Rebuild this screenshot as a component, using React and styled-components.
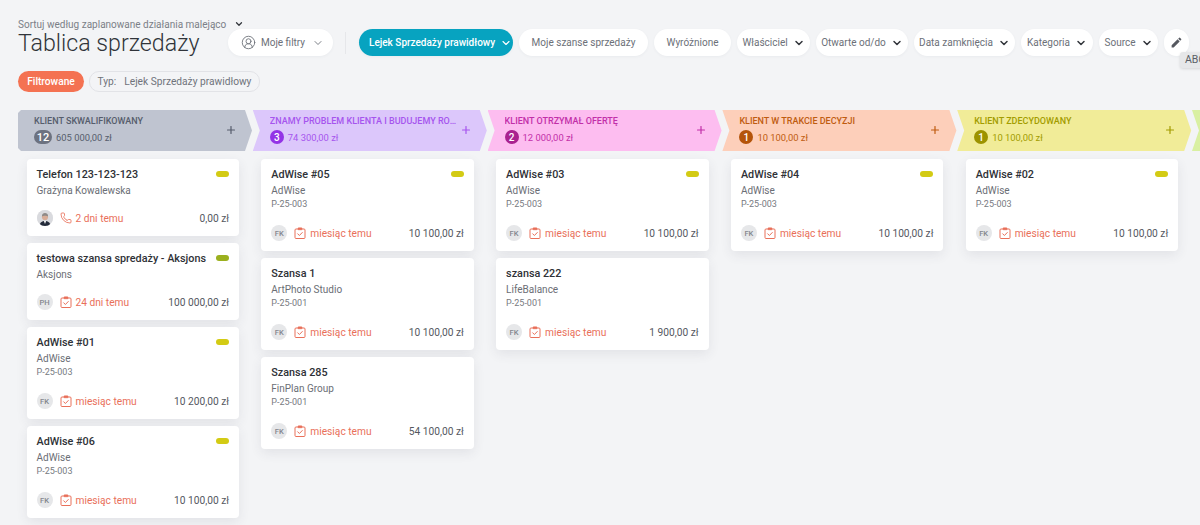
import React from "react";
import styled, { createGlobalStyle } from "styled-components";
import { ChevronDown, CircleUserRound, Phone, Plus } from "lucide-react";
import { MdEdit } from "react-icons/md";

const GlobalStyle = createGlobalStyle`
  html, body {
    margin: 0;
    padding: 0;
    background: #f3f4f6;
    font-family: Roboto, "Liberation Sans", sans-serif;
  }
`;

const Page = styled.div`
  position: relative;
  width: 1200px;
  height: 525px;
  overflow: hidden;
  background: #f3f4f6;
`;

const TopBar = styled.div`
  display: flex;
  align-items: flex-end;
  padding: 18px 0 0 18px;
`;

const TitleBlock = styled.div`
  width: 210px;
  flex: none;
`;

const SortRow = styled.div`
  display: flex;
  align-items: center;
  gap: 8px;
  height: 12px;
  font-size: 10px;
  color: #7b7f87;
  white-space: nowrap;
  svg {
    flex: none;
    color: #33363c;
  }
`;

const Title = styled.h1`
  margin: 0;
  font-size: 23.2px;
  line-height: 26px;
  font-weight: 300;
  color: #30343a;
  white-space: nowrap;
`;

const Chips = styled.div`
  display: flex;
  align-items: center;
  gap: 6px;
`;

const Chip = styled.div`
  display: flex;
  align-items: center;
  justify-content: ${(p) => (p.$pad ? "flex-start" : "center")};
  gap: 5px;
  flex: none;
  box-sizing: border-box;
  width: ${(p) => p.$w}px;
  height: 27px;
  padding-left: ${(p) => p.$pad || 0}px;
  border-radius: 14px;
  background: ${(p) => (p.$active ? "#07a3c0" : "#fff")};
  color: ${(p) => (p.$active ? "#fff" : "#6c7078")};
  font-size: 10px;
  font-weight: ${(p) => (p.$active ? 500 : 400)};
  white-space: nowrap;
  box-shadow: 0 1px 3px rgba(60, 70, 90, 0.05);
`;

const FiltersChevron = styled(ChevronDown)`
  margin-left: 2px;
`;

const Divider = styled.div`
  width: 1px;
  height: 22px;
  background: #e6e7ea;
  margin: 0 7px 0 6px;
  flex: none;
`;

const Tooltip = styled.div`
  position: absolute;
  left: 1180px;
  top: 52px;
  width: 40px;
  height: 16px;
  padding-left: 5px;
  border-radius: 3px;
  background: #e6e7e9;
  color: #5a5e66;
  font-size: 10.5px;
  line-height: 16px;
  box-shadow: 0 1px 3px rgba(0, 0, 0, 0.12);
`;

const FilterRow = styled.div`
  display: flex;
  align-items: center;
  gap: 5px;
  margin: 15px 0 0 18px;
  height: 21px;
`;

const FilterBadge = styled.div`
  width: 66px;
  height: 21px;
  border-radius: 11px;
  background: #f47252;
  color: #fff;
  font-size: 10.2px;
  font-weight: 500;
  line-height: 21px;
  text-align: center;
`;

const FilterTag = styled.div`
  display: flex;
  gap: 8px;
  align-items: center;
  justify-content: center;
  width: 169px;
  height: 19px;
  border: 1px solid #e2e3e7;
  border-radius: 10px;
  color: #6f737b;
  font-size: 10.2px;
  white-space: nowrap;
`;

const Board = styled.div`
  display: flex;
  margin: 18px 0 0 18px;
`;

const Column = styled.div`
  flex: none;
  width: 234.8px;
`;

const Stage = styled.div`
  position: relative;
  height: 41px;
  width: 235px;
  box-sizing: border-box;
  padding: 5px 0 0 ${(p) => (p.$first ? 16 : 17)}px;
  background: ${(p) => p.$bg};
  color: ${(p) => p.$fg};
  clip-path: ${(p) =>
    p.$first
      ? "polygon(0 3px, 3px 0, 227px 0, 234px 50%, 227px 100%, 3px 100%, 0 calc(100% - 3px))"
      : "polygon(0 0, 227px 0, 234px 50%, 227px 100%, 0 100%, 7px 50%)"};
`;

const StageName = styled.div`
  width: 190px;
  font-size: 9px;
  font-weight: 500;
  line-height: 13px;
  text-transform: uppercase;
  white-space: nowrap;
  overflow: hidden;
  text-overflow: ellipsis;
`;

const StageSum = styled.div`
  display: flex;
  align-items: center;
  gap: 4px;
  margin-top: 2px;
  font-size: 9.4px;
  color: ${(p) => p.$fg};
`;

const Count = styled.span`
  display: inline-flex;
  align-items: center;
  justify-content: center;
  min-width: ${(p) => (p.$wide ? 18 : 14)}px;
  height: 14px;
  border-radius: 7px;
  background: ${(p) => p.$bg};
  color: #fff;
  font-size: ${(p) => (p.$wide ? 11 : 10)}px;
  font-weight: 500;
`;

const AddButton = styled.div`
  position: absolute;
  right: 16px;
  top: 14px;
  display: flex;
`;

const CardList = styled.div`
  display: flex;
  flex-direction: column;
  gap: 7px;
  margin-top: 8px;
  padding-left: 8.5px;
  width: 212.5px;
`;

const Card = styled.div`
  box-sizing: border-box;
  padding: 8px 10px 9px;
  background: #fff;
  border-radius: 4px;
  box-shadow: 0 4px 12px rgba(50, 60, 80, 0.09);
`;

const CardHead = styled.div`
  display: flex;
  align-items: center;
  justify-content: space-between;
  height: 14px;
`;

const CardTitle = styled.div`
  font-size: 10.8px;
  font-weight: 500;
  color: #2e3136;
  white-space: nowrap;
`;

const Label = styled.div`
  width: 13px;
  height: 6px;
  border-radius: 3px;
  background: ${(p) => p.$color};
  flex: none;
`;

const Company = styled.div`
  margin-top: 3px;
  font-size: 10px;
  line-height: 13px;
  color: #6b6e75;
`;

const Code = styled.div`
  font-size: 9px;
  line-height: 15px;
  color: #777a81;
`;

const CardFoot = styled.div`
  display: flex;
  align-items: center;
  height: 18px;
  margin-top: 12px;
`;

const Avatar = styled.div`
  display: flex;
  align-items: center;
  justify-content: center;
  width: 16px;
  height: 16px;
  border-radius: 50%;
  background: #e6e7e9;
  color: #85888f;
  font-size: 7.6px;
  font-weight: 500;
  overflow: hidden;
  flex: none;
`;

const Due = styled.div`
  display: flex;
  align-items: center;
  gap: 4px;
  margin-left: 7px;
  color: #e9705a;
  font-size: 10.2px;
  white-space: nowrap;
`;

const Amount = styled.div`
  margin-left: auto;
  font-size: 10.2px;
  color: #55585f;
  white-space: nowrap;
`;

const PersonPhoto = () => (
  <svg width="16" height="16" viewBox="0 0 16 16">
    <rect width="16" height="16" fill="#d9dade" />
    <path d="M2.5 16c.3-3.6 2.4-5 5.5-5s5.2 1.400 5.500 5z" fill="#232a3a" />
    <path d="M6.800 11h2.400l-1.200 3z" fill="#f2f2f2" />
    <circle cx="8" cy="7" r="3.100" fill="#d8ad98" />
    <path d="M4.900 6.400C5 3.900 6.400 3 8 3s3.100.9 3.100 3.400C10 5.500 6 5.500 4.900 6.400z" fill="#8e8a88" />
  </svg>
);

const TaskIcon = () => (
  <svg width="12" height="12" viewBox="0 0 12 12" fill="none" stroke="currentColor" strokeWidth="1">
    <rect x="1" y="2" width="10" height="9.500" rx="1" />
    <rect x="4" y="0.800" width="4" height="2" rx="0.500" fill="currentColor" strokeWidth="0.500" />
    <path d="M3.700 6.800l1.700 1.700 2.900-3" strokeLinecap="round" strokeLinejoin="round" />
  </svg>
);

const stages = [
  {
    name: "Klient skwalifikowany",
    bg: "#bfc4d0",
    fg: "#565d6c",
    badge: "#6c7280",
    count: "12",
    sum: "605 000,00 zł",
    cards: [
      { title: "Telefon 123-123-123", company: "Grażyna Kowalewska", photo: true, phone: true, due: "2 dni temu", amount: "0,00 zł", label: "#d3cb14" },
      { title: "testowa szansa spredaży - Aksjons", company: "Aksjons", who: "PH", due: "24 dni temu", amount: "100 000,00 zł", label: "#9bb01e" },
      { title: "AdWise #01", company: "AdWise", code: "P-25-003", who: "FK", due: "miesiąc temu", amount: "10 200,00 zł", label: "#d3cb14" },
      { title: "AdWise #06", company: "AdWise", code: "P-25-003", who: "FK", due: "miesiąc temu", amount: "10 100,00 zł", label: "#d3cb14" },
    ],
  },
  {
    name: "Znamy problem klienta i budujemy rozwiązanie",
    bg: "#dcc7fb",
    fg: "#a655ee",
    badge: "#9333e6",
    count: "3",
    sum: "74 300,00 zł",
    cards: [
      { title: "AdWise #05", company: "AdWise", code: "P-25-003", who: "FK", due: "miesiąc temu", amount: "10 100,00 zł", label: "#d3cb14" },
      { title: "Szansa 1", company: "ArtPhoto Studio", code: "P-25-001", who: "FK", due: "miesiąc temu", amount: "10 100,00 zł" },
      { title: "Szansa 285", company: "FinPlan Group", code: "P-25-001", who: "FK", due: "miesiąc temu", amount: "54 100,00 zł" },
    ],
  },
  {
    name: "Klient otrzymał ofertę",
    bg: "#fdbdf0",
    fg: "#c22fa8",
    badge: "#a9228f",
    count: "2",
    sum: "12 000,00 zł",
    cards: [
      { title: "AdWise #03", company: "AdWise", code: "P-25-003", who: "FK", due: "miesiąc temu", amount: "10 100,00 zł", label: "#d3cb14" },
      { title: "szansa 222", company: "LifeBalance", code: "P-25-001", who: "FK", due: "miesiąc temu", amount: "1 900,00 zł" },
    ],
  },
  {
    name: "Klient w trakcie decyzji",
    bg: "#fdcfba",
    fg: "#bf5c10",
    badge: "#b4540a",
    count: "1",
    sum: "10 100,00 zł",
    cards: [
      { title: "AdWise #04", company: "AdWise", code: "P-25-003", who: "FK", due: "miesiąc temu", amount: "10 100,00 zł", label: "#d3cb14" },
    ],
  },
  {
    name: "Klient zdecydowany",
    bg: "#f1ec98",
    fg: "#a39c00",
    badge: "#9c9300",
    count: "1",
    sum: "10 100,00 zł",
    cards: [
      { title: "AdWise #02", company: "AdWise", code: "P-25-003", who: "FK", due: "miesiąc temu", amount: "10 100,00 zł", label: "#d3cb14" },
    ],
  },
];

const filterChips = [
  { text: "Właściciel", w: 73 },
  { text: "Otwarte od/do", w: 92 },
  { text: "Data zamknięcia", w: 101 },
  { text: "Kategoria", w: 72 },
  { text: "Source", w: 59 },
];

const DealCard = ({ deal }) => (
  <Card>
    <CardHead>
      <CardTitle>{deal.title}</CardTitle>
      {deal.label && <Label $color={deal.label} />}
    </CardHead>
    <Company>{deal.company}</Company>
    {deal.code && <Code>{deal.code}</Code>}
    <CardFoot>
      <Avatar>{deal.photo ? <PersonPhoto /> : deal.who}</Avatar>
      <Due>
        {deal.phone ? <Phone size={12} strokeWidth={1.7} /> : <TaskIcon />}
        {deal.due}
      </Due>
      <Amount>{deal.amount}</Amount>
    </CardFoot>
  </Card>
);

const App = () => {
  return (
    <Page>
      <GlobalStyle />
      <TopBar>
        <TitleBlock>
          <SortRow>
            Sortuj według zaplanowane działania malejąco
            <ChevronDown size={10} strokeWidth={3} />
          </SortRow>
          <Title>Tablica sprzedaży</Title>
        </TitleBlock>
        <Chips>
          <Chip $w={105} $pad={13}>
            <CircleUserRound size={15} strokeWidth={1.4} />
            Moje filtry
            <FiltersChevron size={12} strokeWidth={1.8} />
          </Chip>
          <Divider />
          <Chip $w={154} $pad={10} $active>
            Lejek Sprzedaży prawidłowy
            <ChevronDown size={12} strokeWidth={2.2} />
          </Chip>
          <Chip $w={129}>Moje szanse sprzedaży</Chip>
          <Chip $w={77}>Wyróżnione</Chip>
          {filterChips.map((c) => (
            <Chip key={c.text} $w={c.w}>
              {c.text}
              <ChevronDown size={12} strokeWidth={3} color="#33363c" />
            </Chip>
          ))}
          <Chip $w={25}>
            <MdEdit size={13} color="#55585f" />
          </Chip>
        </Chips>
      </TopBar>
      <Tooltip>ABC</Tooltip>
      <FilterRow>
        <FilterBadge>Filtrowane</FilterBadge>
        <FilterTag>
          <span>Typ:</span>
          <span>Lejek Sprzedaży prawidłowy</span>
        </FilterTag>
      </FilterRow>
      <Board>
        {stages.map((s, i) => (
          <Column key={s.name}>
            <Stage $bg={s.bg} $fg={s.fg} $first={i === 0}>
              <StageName>{s.name}</StageName>
              <StageSum $fg={s.fg}>
                <Count $bg={s.badge} $wide={s.count.length > 1}>{s.count}</Count>
                {s.sum}
              </StageSum>
              <AddButton>
                <Plus size={12} strokeWidth={2.4} />
              </AddButton>
            </Stage>
            <CardList>
              {s.cards.map((d) => (
                <DealCard key={d.title} deal={d} />
              ))}
            </CardList>
          </Column>
        ))}
        <Column>
          <Stage $bg="#d9f0a2" $fg="#7f9e10" />
        </Column>
      </Board>
    </Page>
  );
};

export default App;
